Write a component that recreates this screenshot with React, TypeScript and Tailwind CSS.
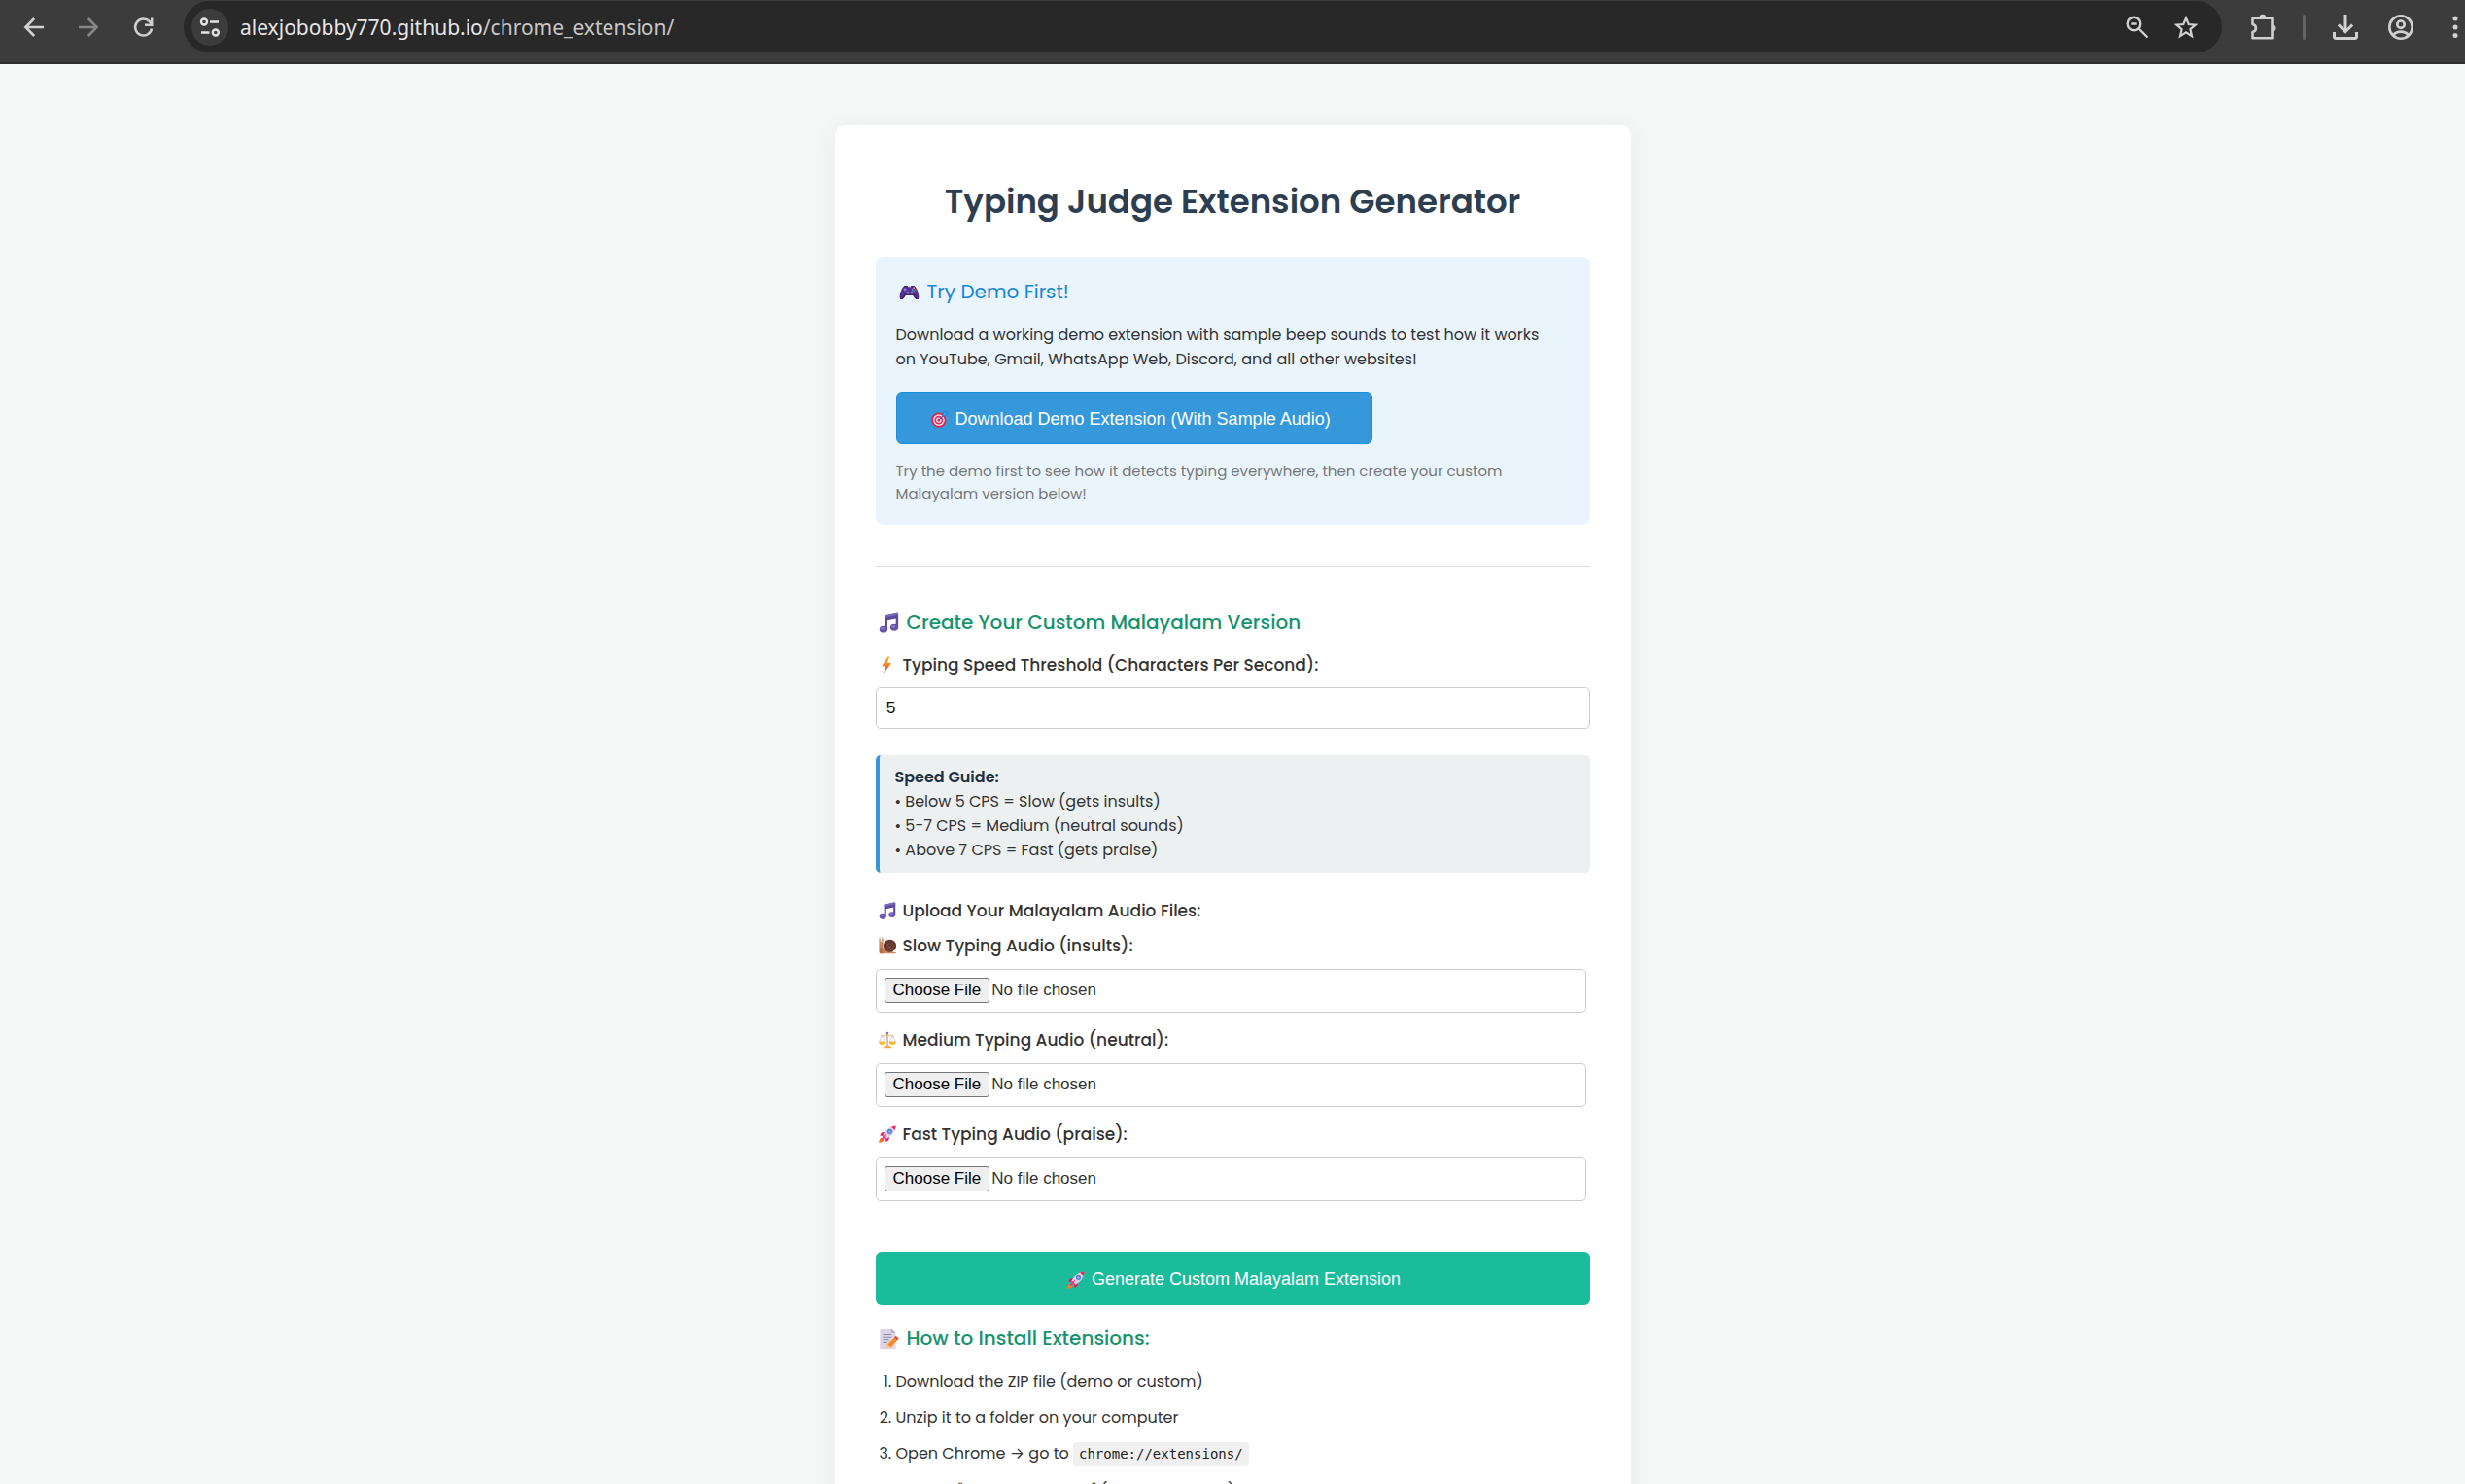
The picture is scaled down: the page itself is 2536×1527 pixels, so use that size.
import React, { useState } from 'react';

type IconProps = { className: string };

/* ---------- toolbar icons ---------- */

const BackIcon = ({ className }: IconProps) => (
  <svg viewBox="0 0 30 30" fill="none" stroke="currentColor" strokeWidth="2.6" className={className}>
    <path d="M25 15H7M15.2 6 6.4 15l8.8 9" />
  </svg>
);

const ForwardIcon = ({ className }: IconProps) => (
  <svg viewBox="0 0 30 30" fill="none" stroke="currentColor" strokeWidth="2.6" className={className}>
    <path d="M5 15h18M14.8 6l8.8 9-8.8 9" />
  </svg>
);

const ReloadIcon = ({ className }: IconProps) => (
  <svg viewBox="0 0 30 30" fill="none" stroke="currentColor" strokeWidth="2.5" className={className}>
    <path d="M24 16.500A8.500 8.500 0 1 1 21.800 9.200l2.200 2.500" />
    <path d="M24.200 5.500v7.200H17" />
  </svg>
);

const SiteIcon = ({ className }: IconProps) => (
  <svg viewBox="0 0 24 24" fill="none" stroke="currentColor" strokeWidth="2.4" className={className}>
    <circle cx="6" cy="6.5" r="3" />
    <path d="M12 6.5h9M3 17.5h8.5" />
    <circle cx="17.8" cy="17.5" r="3" />
  </svg>
);

const ZoomOutIcon = ({ className }: IconProps) => (
  <svg viewBox="0 0 30 30" fill="none" stroke="currentColor" strokeWidth="2.4" className={className}>
    <circle cx="11.500" cy="11.500" r="6.800" />
    <path d="M16.500 16.500l9 9M8.300 11.500h6.400" />
  </svg>
);

const StarIcon = ({ className }: IconProps) => (
  <svg viewBox="0 0 30 30" fill="none" stroke="currentColor" strokeWidth="2.2" className={className}>
    <path d="M15 5.500l2.700 6.500 7 .6-5.300 4.600 1.600 6.900L15 20.400l-6 3.700 1.600-6.900-5.300-4.600 7-.6z" />
  </svg>
);

const PuzzleIcon = ({ className }: IconProps) => (
  <svg viewBox="0 0 30 30" fill="none" stroke="currentColor" strokeWidth="2.6" strokeLinejoin="round" className={className}>
    <path d="M3.500 5.700h20v20.500h-20v-6.200c2.200-.5 3.400-2 3.400-4s-1.200-3.500-3.400-4z" />
    <path d="M10.600 5a3.300 3.300 0 0 1 6.600 0zM24.200 12.700a3.300 3.300 0 0 1 0 6.600z" fill="currentColor" stroke="none" />
  </svg>
);

const DownloadIcon = ({ className }: IconProps) => (
  <svg viewBox="0 0 30 30" fill="none" stroke="currentColor" strokeWidth="3" className={className}>
    <path d="M15 2v17M7.800 12.500l7.200 7.200 7.200-7.200M3.500 20v5a1.500 1.500 0 0 0 1.500 1.500h20a1.500 1.500 0 0 0 1.500-1.500v-5" />
  </svg>
);

const AccountIcon = ({ className }: IconProps) => (
  <svg viewBox="0 0 30 30" fill="none" stroke="currentColor" strokeWidth="2.600" className={className}>
    <circle cx="15" cy="15" r="11.700" />
    <circle cx="15" cy="12.200" r="3.700" />
    <path d="M7 23.200c2-2.300 4.700-3.600 8-3.600s6 1.300 8 3.600" />
  </svg>
);

const DotsIcon = ({ className }: IconProps) => (
  <svg viewBox="0 0 20 30" fill="currentColor" className={className}>
    <circle cx="10" cy="6" r="2.500" />
    <circle cx="10" cy="15" r="2.500" />
    <circle cx="10" cy="23.500" r="2.500" />
  </svg>
);

/* ---------- emoji drawings ---------- */

const Gamepad = ({ className }: IconProps) => (
  <svg viewBox="0 0 24 24" className={className}>
    <path d="M6.500 4.500h3l1 1.500h3l1-1.500h3C20 5 23.300 13 23.300 18c0 3-3.300 3.600-5 .9L16.500 16h-9l-1.800 2.900c-1.700 2.700-5 2.100-5-.9C.7 13 4 5 6.500 4.500z" fill="#56308f" />
    <path d="M6.500 4.500h3l1 1.500h3l1-1.500h3l1 1.500H5.500z" fill="#3d1f6b" />
    <path d="M1 19.500c1.200 1.500 3.300 1.300 4.700-.6L7.500 16h9l1.800 2.900c1.400 1.900 3.500 2.100 4.700.6-2-.2-3-1-4-2.500l-1.500-2.300h-11L5 17c-1 1.500-2 2.300-4 2.500z" fill="#3d1f6b" />
    <circle cx="7" cy="9" r="1.700" fill="#8f7bc4" />
    <path d="M9.300 11.300h1.400v3H9.300z M8.500 12.100h3v1.400h-3z" fill="#6da0e0" />
    <circle cx="14.800" cy="12.600" r="1.600" fill="#8f7bc4" />
    <circle cx="17.300" cy="7" r="1" fill="#f5b62c" />
    <circle cx="19" cy="9" r="1" fill="#f0483e" />
    <circle cx="15.500" cy="9" r="1" fill="#4c9cf0" />
    <circle cx="17.300" cy="10.600" r="1" fill="#49c07a" />
  </svg>
);

const Target = ({ className }: IconProps) => (
  <svg viewBox="0 0 24 24" className={className}>
    <circle cx="10.500" cy="13.500" r="10.300" fill="#e0234e" />
    <circle cx="10.500" cy="13.500" r="7.800" fill="#f4e3ee" />
    <circle cx="10.500" cy="13.500" r="5.800" fill="#e0305c" />
    <circle cx="10.500" cy="13.500" r="3.600" fill="#f4e3ee" />
    <circle cx="10.500" cy="13.500" r="1.800" fill="#e0234e" />
    <path d="M10.500 13.500 18 6" stroke="#1d5fb0" strokeWidth="1.400" />
    <path d="M16 7.500V4l3.500-3.500.6 3 3.200.8L20 8z" fill="#2fa4ee" stroke="#1769b5" strokeWidth=".7" />
  </svg>
);

const MusicNotes = ({ className }: IconProps) => (
  <svg viewBox="0 0 24 24" className={className}>
    <path d="M7.500 3.800 21.500.8c.8-.1 1.500.4 1.500 1.200v15.500h-2.800V7.300L10.300 9.500v10.300H7.500z" fill="#5c4a9c" />
    <path d="M7.500 3.800 21.500.8c.8-.1 1.500.4 1.500 1.200v1L7.500 6.200z" fill="#7a68ba" />
    <ellipse cx="5.600" cy="19.600" rx="4.700" ry="3.900" fill="#6453a8" />
    <ellipse cx="18.300" cy="17.400" rx="4.700" ry="3.900" fill="#6453a8" />
    <ellipse cx="4.600" cy="18.500" rx="2.200" ry="1.500" fill="#8979c8" />
    <ellipse cx="17.300" cy="16.300" rx="2.200" ry="1.500" fill="#8979c8" />
  </svg>
);

const Bolt = ({ className }: IconProps) => (
  <svg viewBox="0 0 24 24" className={className}>
    <defs>
      <linearGradient id="bolt" x1="0" y1="0" x2="0" y2="1">
        <stop offset="0" stopColor="#fdb022" />
        <stop offset=".55" stopColor="#fa7a22" />
        <stop offset="1" stopColor="#ee2f4f" />
      </linearGradient>
    </defs>
    <path d="M13 0 5 12.500c-.3.500 0 1 .6 1h3.700L6.800 24l10-13.600c.4-.6 0-1.200-.6-1.200h-4.400l3-8.200z" fill="url(#bolt)" />
  </svg>
);

const Snail = ({ className }: IconProps) => (
  <svg viewBox="0 0 24 24" className={className}>
    <path d="M.5 2c0-1 1.700-1 1.700 0l.3 5h1.600l.3-5.200c0-1.100 1.700-1.100 1.700 0V17l17.400 4.500c.8.400.5 1.500-.4 1.500H3C1.500 23 .7 22 .7 20.500z" fill="#c98660" />
    <path d="M1 15h5v8H3c-1.300 0-2-1-2-2.500z" fill="#b56e4a" />
    <circle cx="15.300" cy="12.200" r="8.700" fill="#5e342c" />
    <circle cx="14.600" cy="12.500" r="6.800" fill="#7b4a3f" />
    <path d="M19.500 12a5 5 0 1 0-5 5.200c2.300 0 3.600-1.500 3.600-3.300 0-1.900-1.300-3-3-3s-2.600 1.100-2.600 2.500" fill="none" stroke="#4a2620" strokeWidth="1.200" />
  </svg>
);

const Scales = ({ className }: IconProps) => (
  <svg viewBox="0 0 24 24" className={className}>
    <path d="M11 3.500h2V20h-2z" fill="#d7a98a" />
    <circle cx="12" cy="2.800" r="1.800" fill="#8c6fc0" />
    <path d="M3 6.500c4 1 6-1.500 9-1.500s5 2.500 9 1.500" fill="none" stroke="#e9a552" strokeWidth="1.300" />
    <path d="M4.800 6.500.9 14.500M4.800 6.500l4 8M19.200 6.500l-4 8M19.200 6.500l3.900 8" stroke="#c5b3d8" strokeWidth=".9" />
    <path d="M0 14h9.600c0 3-2 4.800-4.800 4.800S0 17 0 14zM14.400 14H24c0 3-2 4.800-4.800 4.800s-4.800-1.800-4.800-4.800z" fill="#fbb62f" />
    <path d="M7 21.500c1-1.500 3-2 5-2s4 .5 5 2l1.500 1.500h-13z" fill="#f9a93b" />
  </svg>
);

const Rocket = ({ className }: IconProps) => (
  <svg viewBox="0 0 24 24" className={className}>
    <path d="M4 16.500l3.500 3.500c-.5 2.500-3.500 3.700-7.300 4C.2 20.500 1.500 17 4 16.500z" fill="#fb7b1d" />
    <path d="M8 9.500c-3-.6-5 .8-6.300 4.500l5.500.5zM14.500 16c.6 3-.8 5-4.500 6.500l-.7-5.500z" fill="#e3195b" />
    <path d="M5 15C8 7 14 1.500 23.500.5 22.500 10 17 16 9 19z" fill="#d6cfe6" />
    <path d="M17.300 1.900C19.200 1.200 21.200.7 23.500.5c-.2 2.300-.7 4.300-1.400 6.200z" fill="#ee2458" />
    <path d="M5 15l4 4 2.500-1-5.400-5.400z" fill="#f13a8b" />
    <path d="M3 21c1-4 4-7.500 8-9.500-1.500 4.500-4 7.500-8 9.500z" fill="#f92e7a" />
    <circle cx="15.300" cy="8.700" r="3.300" fill="#3f68c4" />
    <circle cx="15.300" cy="8.700" r="1.800" fill="#7fc0f4" />
  </svg>
);

const Memo = ({ className }: IconProps) => (
  <svg viewBox="0 0 24 24" className={className}>
    <path d="M1.500 0h13L20 5.500V24H1.500z" fill="#dcd5e6" />
    <path d="M14.500 0 20 5.500h-5.500z" fill="#b9aec9" />
    <path d="M5 7.500h10M5 10.500h10M5 13.500h7M5 16.500h5" stroke="#8f86a3" strokeWidth="1.200" />
    <path d="M20 8.800l3.600 2.800-2 2.600-3.600-2.800z" fill="#f0483e" />
    <path d="M18.300 11.200l3.500 2.700-7.600 8.300-4.200-3.400z" fill="#fb8a24" />
    <path d="M10 18.800l4.200 3.400L7 24z" fill="#f4c69a" />
  </svg>
);

/* ---------- page pieces ---------- */

const heading = 'flex items-center text-[20px] leading-8';

function Emoji({ icon: Icon, large = false }: { icon: React.FC<IconProps>; large?: boolean }) {
  return large ? (
    <span className="w-8 shrink-0 pl-[3px]" aria-hidden="true">
      <Icon className="size-[21px]" />
    </span>
  ) : (
    <span className="w-7 shrink-0 pl-[3px]" aria-hidden="true">
      <Icon className="size-[18px]" />
    </span>
  );
}

function FileField({ id, label, icon }: { id: string; label: string; icon: React.FC<IconProps> }) {
  return (
    <div className="mb-[15px]">
      <label htmlFor={id} className="mb-[11px] flex items-center text-[17px] leading-[26px] font-medium">
        <Emoji icon={icon} />
        {label}
      </label>
      <div className="pr-1">
        <input
          id={id}
          type="file"
          className="block h-[45px] w-full rounded-[5px] border border-[#ccc] pt-2 pl-2 font-['Liberation_Sans',sans-serif] text-[17px] leading-[22px] file:mr-0.5 file:h-[26px] file:rounded-[3px] file:border file:border-solid file:border-[#767676] file:bg-[#efefef] file:px-2 file:text-black"
        />
      </div>
    </div>
  );
}

function Toolbar() {
  return (
    <header className="flex h-[66px] shrink-0 items-start border-b-2 border-[#2e2e2e] bg-[#3c3c3c] pt-px text-[#d0d0d0]">
      <nav className="flex h-[53px] items-center gap-[26px] pl-5">
        <button aria-label="Back"><BackIcon className="size-[30px]" /></button>
        <button aria-label="Forward" className="text-[#868686]"><ForwardIcon className="size-[30px]" /></button>
        <button aria-label="Reload"><ReloadIcon className="size-[30px]" /></button>
      </nav>
      <div className="ml-[27px] flex h-[53px] flex-1 items-center rounded-full bg-[#282828] pr-[22px] pl-2">
        <button aria-label="View site information" className="flex size-[38px] items-center justify-center rounded-full bg-[#3c3c3c] text-[#e3e3e3]">
          <SiteIcon className="size-6" />
        </button>
        <span className="ml-3 flex-1 font-['Noto_Sans',sans-serif] text-[21px] leading-8 text-[#e6e6e6]">
          alexjobobby770.github.io<span className="text-[#c7c7c7]">/chrome_extension/</span>
        </span>
        <button aria-label="Zoom"><ZoomOutIcon className="size-[30px]" /></button>
        <button aria-label="Bookmark this page" className="ml-5"><StarIcon className="size-[30px]" /></button>
      </div>
      <div className="flex h-[53px] items-center">
        <button aria-label="Extensions" className="ml-7"><PuzzleIcon className="size-[30px]" /></button>
        <span className="ml-[25px] h-[26px] w-[3px] rounded-full bg-[#646464]" />
        <button aria-label="Downloads" className="ml-[26px]"><DownloadIcon className="size-[30px]" /></button>
        <button aria-label="Profile" className="ml-[27px]"><AccountIcon className="size-[30px]" /></button>
        <button aria-label="Menu" className="ml-[31px]"><DotsIcon className="h-[30px] w-5" /></button>
      </div>
    </header>
  );
}

export default function App() {
  const [cps, setCps] = useState('5');
  return (
    <div className="flex h-screen flex-col overflow-hidden bg-[#f4f7f6] font-['Poppins','Inter',sans-serif] text-[#333]">
      <Toolbar />
      <main className="min-h-0 flex-1 overflow-hidden px-5 pt-[63px]">
        <div className="mx-auto max-w-[819px] rounded-[10px] bg-white px-[42px] pt-[52px] pb-10 shadow-[0_4px_26px_rgba(0,0,0,0.06)]">
          <h1 className="mb-[31px] text-center text-[34px] leading-[52px] font-semibold text-[#2c3e50]">
            Typing Judge Extension Generator
          </h1>

          <section className="rounded-lg bg-[#e9f4fd] px-[21px] pt-5 pb-[21px]">
            <h3 className={`${heading} text-[#1585d4]`}>
              <Emoji icon={Gamepad} large />
              Try Demo First!
            </h3>
            <p className="mt-4 text-[16px] leading-[25px]">
              Download a working demo extension with sample beep sounds to test how it works
              <br />
              on YouTube, Gmail, WhatsApp Web, Discord, and all other websites!
            </p>
            <button className="mt-[21px] flex h-[54px] min-w-[490px] items-center rounded-md border border-[#1a8fdb] bg-[#3498db] px-8 pt-0.5 font-['Liberation_Sans',sans-serif] text-[18px] text-white">
              <Emoji icon={Target} />
              Download Demo Extension (With Sample Audio)
            </button>
            <p className="mt-4 text-[15px] leading-[23px] text-[#777]">
              Try the demo first to see how it detects typing everywhere, then create your custom
              <br />
              Malayalam version below!
            </p>
          </section>

          <hr className="mt-[42px] border-[#ddd]" />

          <form onSubmit={(e) => e.preventDefault()}>
            <h3 className={`${heading} mt-[41px] font-medium text-[#16936c]`}>
              <Emoji icon={MusicNotes} large />
              Create Your Custom Malayalam Version
            </h3>
            <label htmlFor="cps" className="mt-[15px] flex items-center text-[17px] leading-[26px] font-medium">
              <Emoji icon={Bolt} />
              Typing Speed Threshold (Characters Per Second):
            </label>
            <input
              id="cps"
              value={cps}
              onChange={(e) => setCps(e.target.value)}
              className="mt-2.5 block h-[43px] w-full rounded-[5px] border border-[#ccc] px-2.5 text-[16px] text-black"
            />

            <div className="mt-[27px] rounded-[5px] border-l-4 border-[#3498db] bg-[#ecf0f1] pt-2.5 pb-[11px] pl-4 text-[16px] leading-[25px]">
              <strong className="font-semibold text-[#1f2f40]">Speed Guide:</strong>
              <br />• Below 5 CPS = Slow (gets insults)
              <br />• 5-7 CPS = Medium (neutral sounds)
              <br />• Above 7 CPS = Fast (gets praise)
            </div>

            <p className="mt-[26px] mb-2.5 flex items-center text-[17px] leading-[26px] font-medium">
              <Emoji icon={MusicNotes} />
              Upload Your Malayalam Audio Files:
            </p>
            <FileField id="slow" label="Slow Typing Audio (insults):" icon={Snail} />
            <FileField id="medium" label="Medium Typing Audio (neutral):" icon={Scales} />
            <FileField id="fast" label="Fast Typing Audio (praise):" icon={Rocket} />

            <button className="mt-[52px] flex h-[55px] w-full items-center justify-center rounded-md bg-[#1abc9c] pt-0.5 font-['Liberation_Sans',sans-serif] text-[18px] text-white">
              <Emoji icon={Rocket} />
              Generate Custom Malayalam Extension
            </button>
          </form>

          <h3 className={`${heading} mt-[18px] font-medium text-[#16936c]`}>
            <Emoji icon={Memo} large />
            How to Install Extensions:
          </h3>
          <ol className="mt-4 list-decimal space-y-3 pl-[21px] text-[16px] leading-[25px]">
            <li>Download the ZIP file (demo or custom)</li>
            <li>Unzip it to a folder on your computer</li>
            <li>
              Open Chrome → go to{' '}
              <code className="rounded bg-[#f0f0f0] px-1.5 py-1 font-['DejaVu_Sans_Mono',monospace] text-[14px] text-[#222]">
                chrome://extensions/
              </code>
            </li>
            <li>Turn on "Developer mode" (top right toggle)</li>
          </ol>
        </div>
      </main>
    </div>
  );
}
